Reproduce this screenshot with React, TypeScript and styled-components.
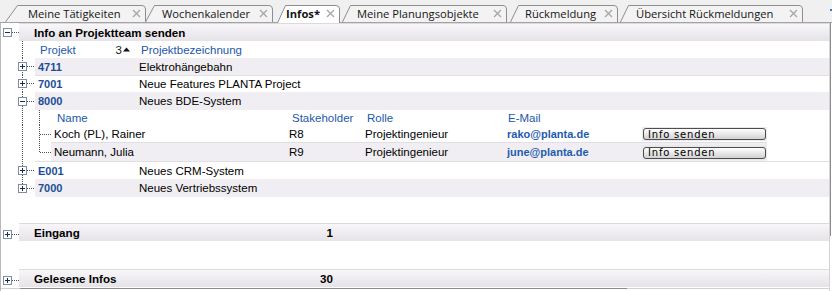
import React from "react";
import styled, { createGlobalStyle } from "styled-components";

const GlobalStyle = createGlobalStyle`
  html, body { margin: 0; padding: 0; background: #ffffff; overflow: hidden; }
  #root { width: 832px; height: 291px; }
`;

const SANS = `"Liberation Sans", Arial, sans-serif`;
const TABFONT = `"Open Sans", "Noto Sans", sans-serif`;
const BTNFONT = `"DejaVu Sans", Verdana, sans-serif`;

const HEAD_BLUE = "#2458a8";
const ID_BLUE = "#1c4d9a";
const MAIL_BLUE = "#1d5cad";
const ALT_BG = "#f0eef2";

/* ---------- window ---------- */
const Window = styled.div`
  width: 832px;
  height: 291px;
  display: flex;
  flex-direction: column;
  overflow: hidden;
  background: #ffffff;
  font-family: ${SANS};
  font-size: 11.5px;
  color: #000;
`;

/* ---------- tab strip ---------- */
const TabStrip = styled.div`
  flex: none;
  height: 22px;
  display: flex;
  align-items: flex-end;
  background: #f0f0f0;
  border-bottom: 1px solid #a3a3a3;
  position: relative;
`;

const Tab = styled.div<{ $w: number; $ml: number; $pl: number; $active?: boolean }>`
  position: relative;
  z-index: ${(p) => (p.$active ? 3 : 1)};
  flex: none;
  box-sizing: border-box;
  width: ${(p) => p.$w}px;
  margin-left: ${(p) => p.$ml}px;
  height: ${(p) => (p.$active ? 18 : 17)}px;
  margin-bottom: ${(p) => (p.$active ? -1 : 0)}px;
  padding: 0 5px ${(p) => (p.$active ? 1 : 0)}px ${(p) => p.$pl}px;
  display: flex;
  align-items: center;
  justify-content: space-between;
  font-family: ${TABFONT};
  font-size: 11.2px;
  font-weight: ${(p) => (p.$active ? 700 : 400)};
  color: #161616;
  white-space: nowrap;
`;

const TabShape = styled.svg`
  position: absolute;
  left: 0;
  top: 0;
  z-index: -1;
  display: block;
`;

const TabLabel = styled.span`
  line-height: 14px;
`;

const CloseIcon = styled.svg`
  flex: none;
  display: block;
`;

const StripMark = styled.div`
  position: absolute;
  right: 0;
  top: 9px;
  width: 2px;
  height: 2px;
  background: #3a78c8;
`;

/* ---------- main area ---------- */
const Main = styled.div`
  flex: 1;
  min-height: 0;
  display: flex;
`;

const Content = styled.div`
  flex: none;
  width: 829px;
  box-sizing: border-box;
  border-left: 1px solid #b9b9b9;
  display: flex;
  flex-direction: column;
`;

const VScroll = styled.div`
  flex: 1;
  border-left: 1px solid #d4d4d4;
  display: flex;
  flex-direction: column;
`;

const VThumb = styled.div`
  margin-top: 0;
  width: 1px;
  height: 213px;
  background: #8c8c8c;
`;

const HScroll = styled.div`
  margin-top: auto;
  height: 2px;
  display: flex;
  border-top: 1px solid #d0d0d0;
`;

const HThumb = styled.div`
  margin-left: 19px;
  margin-top: -1px;
  width: 607px;
  border-top: 1px solid #8c8c8c;
`;

/* ---------- rows ---------- */
const Row = styled.div<{ $h: number; $mt?: number }>`
  flex: none;
  height: ${(p) => p.$h}px;
  margin-top: ${(p) => p.$mt ?? 0}px;
  display: flex;
`;

const GutterSvg = styled.svg`
  flex: none;
  display: block;
`;

const SectionBand = styled.div`
  flex: 1;
  box-sizing: border-box;
  border-top: 1px solid #dcdadf;
  background: linear-gradient(#f8f6f9, #e5e3e7);
  display: grid;
  grid-template-columns: 250px 49px;
  align-items: center;
  padding-left: 15px;
  font-size: 11.6px;
  font-weight: 700;
`;

const SectionCount = styled.span`
  text-align: right;
`;

const PlainSectionBand = styled(SectionBand)`
  grid-template-columns: 1fr;
`;

const ProjectBand = styled.div<{ $alt?: boolean; $sep?: boolean }>`
  flex: 1;
  box-sizing: border-box;
  display: grid;
  grid-template-columns: 104px 1fr;
  align-items: center;
  background: ${(p) => (p.$alt ? ALT_BG : "transparent")};
  border-top: ${(p) => (p.$sep ? "1px solid #e1dfe3" : "none")};
`;

const HeaderBand = styled.div`
  flex: 1;
  display: grid;
  grid-template-columns: 104px 1fr;
  align-items: center;
  color: ${HEAD_BLUE};
`;

const HeaderIdCell = styled.div`
  display: flex;
  align-items: center;
  justify-content: space-between;
  padding: 0 9px 0 5px;
`;

const SortMark = styled.span`
  display: flex;
  align-items: center;
  gap: 1px;
  color: #1a1a1a;
`;

const HeaderDescCell = styled.div`
  padding-left: 2px;
`;

const IdCell = styled.div`
  padding-left: 3px;
  font-size: 11px;
  font-weight: 700;
  color: ${ID_BLUE};
`;

const DescCell = styled.div`
  color: #000;
`;

const SubBand = styled.div<{ $alt?: boolean; $line?: boolean; $head?: boolean }>`
  flex: none;
  width: 716px;
  box-sizing: border-box;
  display: grid;
  grid-template-columns: 238px 76px 142px 135px 125px;
  align-items: center;
  background: ${(p) => (p.$alt ? ALT_BG : "transparent")};
  border-bottom: ${(p) => (p.$line ? "1px solid #e1dfe3" : "none")};
  color: ${(p) => (p.$head ? HEAD_BLUE : "#000")};
`;

const SubCell = styled.div<{ $pl?: number; $mail?: boolean }>`
  padding-left: ${(p) => p.$pl ?? 0}px;
  color: ${(p) => (p.$mail ? MAIL_BLUE : "inherit")};
  font-weight: ${(p) => (p.$mail ? 700 : 400)};
  font-size: ${(p) => (p.$mail ? "11px" : "inherit")};
  white-space: nowrap;
`;

const ButtonCell = styled.div`
  align-self: stretch;
  margin: 2px 0 1px;
  display: flex;
  align-items: center;
  padding-left: 1px;
  background: #e9e9e9;
`;

const InfoButton = styled.button`
  width: 123px;
  height: 12px;
  box-sizing: border-box;
  margin: 0;
  padding: 0 0 0 4px;
  border: 1px solid #4d4d4d;
  border-radius: 3px;
  background: linear-gradient(#ffffff, #d2d2d2);
  font-family: ${BTNFONT};
  font-size: 10px;
  line-height: 9px;
  letter-spacing: 0.8px;
  color: #000;
  text-align: left;
`;

/* ---------- tree gutter drawing ---------- */
type GutterProps = {
  w: number;
  h: number;
  verts?: { x: number; half?: boolean }[];
  conn?: [number, number];
  box?: { x: number; open: boolean };
  cy?: number;
};

function Gutter({ w, h, verts = [], conn, box, cy }: GutterProps) {
  const c = cy ?? Math.floor(h / 2);
  const dot = { stroke: "#505050", strokeWidth: 1, strokeDasharray: "1 1" } as const;
  return (
    <GutterSvg width={w} height={h} shapeRendering="crispEdges">
      {verts.map((v, i) => (
        <line key={i} x1={v.x + 0.5} y1={0} x2={v.x + 0.5} y2={v.half ? c + 1 : h} {...dot} />
      ))}
      {conn && <line x1={conn[0]} y1={c + 0.5} x2={conn[1]} y2={c + 0.5} {...dot} />}
      {box && (
        <g>
          <rect x={box.x + 0.5} y={c - 3.5} width={8} height={8} fill="#ffffff" stroke="#7d8ea3" />
          <line x1={box.x + 2} y1={c + 0.5} x2={box.x + 7} y2={c + 0.5} stroke="#1b2a5a" />
          {!box.open && <line x1={box.x + 4.5} y1={c - 2} x2={box.x + 4.5} y2={c + 3} stroke="#1b2a5a" />}
        </g>
      )}
    </GutterSvg>
  );
}

function TabOutline({ w, h, s, active }: { w: number; h: number; s: number; active?: boolean }) {
  const d = `M0.5 ${h} L${s + 0.5} 0.5 H${w - 4} Q${w - 0.5} 0.5 ${w - 0.5} 4 V${h}`;
  return (
    <TabShape width={w} height={h}>
      <path d={d} fill={active ? "#ffffff" : "#f3f3f3"} stroke="#8e8e8e" strokeWidth={1} />
    </TabShape>
  );
}

function Close() {
  return (
    <CloseIcon width={9} height={9} viewBox="0 0 9 9">
      <path d="M1 1 L8 8 M8 1 L1 8" stroke="#a6a6a6" strokeWidth={1.3} fill="none" />
    </CloseIcon>
  );
}

const tabs = [
  { label: "Meine Tätigkeiten", w: 141, ml: 5, pl: 23, s: 12 },
  { label: "Wochenkalender", w: 128, ml: -1, pl: 17, s: 9 },
  { label: "Infos*", w: 63, ml: 4, pl: 9, s: 8, active: true },
  { label: "Meine Planungsobjekte", w: 165, ml: 2, pl: 15, s: 8 },
  { label: "Rückmeldung", w: 108, ml: 3, pl: 15, s: 8 },
  { label: "Übersicht Rückmeldungen", w: 183, ml: 2, pl: 16, s: 8 },
];

/* gutter x coordinates are relative to the content's inner left edge (page x - 1) */
const TREE_X = 21; // page x 22
const CHILD_X = 38; // page x 39

function ProjectRow({
  id,
  name,
  h,
  alt,
  sep,
  open,
  last,
}: {
  id: string;
  name: string;
  h: number;
  alt?: boolean;
  sep?: boolean;
  open?: boolean;
  last?: boolean;
}) {
  return (
    <Row $h={h}>
      <Gutter w={34} h={h} verts={[{ x: TREE_X, half: last }]} conn={[26, 33]} box={{ x: 17, open: !!open }} />
      <ProjectBand $alt={alt} $sep={sep}>
        <IdCell>{id}</IdCell>
        <DescCell>{name}</DescCell>
      </ProjectBand>
    </Row>
  );
}

function MemberRow({
  name,
  sh,
  role,
  mail,
  alt,
  line,
  last,
}: {
  name: string;
  sh: string;
  role: string;
  mail: string;
  alt?: boolean;
  line?: boolean;
  last?: boolean;
}) {
  return (
    <Row $h={18}>
      <Gutter w={50} h={18} verts={[{ x: TREE_X }, { x: CHILD_X, half: last }]} conn={[39, 50]} />
      <SubBand $alt={alt} $line={line}>
        <SubCell $pl={3}>{name}</SubCell>
        <SubCell>{sh}</SubCell>
        <SubCell>{role}</SubCell>
        <SubCell $mail>{mail}</SubCell>
        <ButtonCell>
          <InfoButton type="button">Info senden</InfoButton>
        </ButtonCell>
      </SubBand>
    </Row>
  );
}

export default function App() {
  return (
    <>
      <GlobalStyle />
      <Window>
        <TabStrip>
          {tabs.map((t) => (
            <Tab key={t.label} $w={t.w} $ml={t.ml} $pl={t.pl} $active={t.active}>
              <TabOutline w={t.w} h={t.active ? 18 : 17} s={t.s} active={t.active} />
              <TabLabel>{t.label}</TabLabel>
              <Close />
            </Tab>
          ))}
          <StripMark />
        </TabStrip>
        <Main>
          <Content>
            <Row $h={18}>
              <Gutter w={18} h={18} cy={9} conn={[11, 18]} box={{ x: 2, open: true }} />
              <PlainSectionBand>Info an Projektteam senden</PlainSectionBand>
            </Row>
            <Row $h={17}>
              <Gutter w={34} h={17} verts={[{ x: TREE_X }]} />
              <HeaderBand>
                <HeaderIdCell>
                  <span>Projekt</span>
                  <SortMark>
                    3
                    <svg width={7} height={5} viewBox="0 0 7 5">
                      <path d="M0 4.5 L3.5 0.5 L7 4.5 Z" fill="#111" />
                    </svg>
                  </SortMark>
                </HeaderIdCell>
                <HeaderDescCell>Projektbezeichnung</HeaderDescCell>
              </HeaderBand>
            </Row>
            <ProjectRow id="4711" name="Elektrohängebahn" h={17} alt />
            <ProjectRow id="7001" name="Neue Features PLANTA Project" h={17} sep />
            <ProjectRow id="8000" name="Neues BDE-System" h={18} alt open />
            <Row $h={15}>
              <Gutter w={50} h={15} verts={[{ x: TREE_X }, { x: CHILD_X }]} />
              <SubBand $head>
                <SubCell $pl={6}>Name</SubCell>
                <SubCell $pl={3}>Stakeholder</SubCell>
                <SubCell $pl={2}>Rolle</SubCell>
                <SubCell $pl={1}>E-Mail</SubCell>
                <span />
              </SubBand>
            </Row>
            <MemberRow name="Koch (PL), Rainer" sh="R8" role="Projektingenieur" mail="rako@planta.de" line />
            <MemberRow name="Neumann, Julia" sh="R9" role="Projektingenieur" mail="june@planta.de" alt last />
            <ProjectRow id="E001" name="Neues CRM-System" h={18} sep />
            <ProjectRow id="7000" name="Neues Vertriebssystem" h={18} alt last />
            <Row $h={18} $mt={26}>
              <Gutter w={18} h={18} cy={11} conn={[11, 18]} box={{ x: 2, open: false }} />
              <SectionBand>
                <span>Eingang</span>
                <SectionCount>1</SectionCount>
              </SectionBand>
            </Row>
            <Row $h={18} $mt={28}>
              <Gutter w={18} h={18} cy={11} conn={[11, 18]} box={{ x: 2, open: false }} />
              <SectionBand>
                <span>Gelesene Infos</span>
                <SectionCount>30</SectionCount>
              </SectionBand>
            </Row>
            <HScroll>
              <HThumb />
            </HScroll>
          </Content>
          <VScroll>
            <VThumb />
          </VScroll>
        </Main>
      </Window>
    </>
  );
}
